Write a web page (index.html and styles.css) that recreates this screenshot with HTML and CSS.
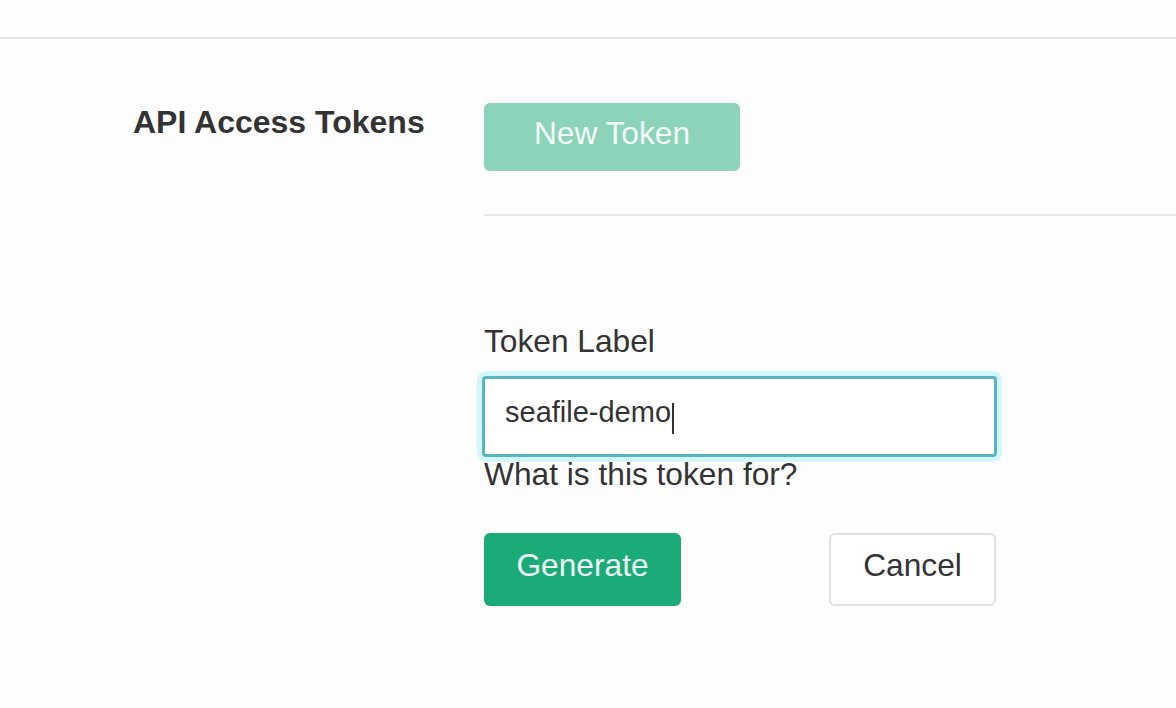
FILE: index.html
```html
<!DOCTYPE html>
<html lang="en">
<head>
<meta charset="utf-8">
<title>API Access Tokens</title>
<link rel="stylesheet" href="styles.css">
</head>
<body>
<div class="topbar"></div>
<section class="settings">
  <h3 class="section-title">API Access Tokens</h3>
  <div class="section-body">
    <button class="btn btn-new" type="button">New Token</button>
    <div class="divider"></div>
    <form class="token-form">
      <label class="field-label">Token Label</label>
      <div class="field-input" role="textbox"><span class="field-value">seafile-demo</span><span class="caret"></span></div>
      <p class="field-help">What is this token for?</p>
      <div class="actions">
        <button class="btn btn-primary" type="button">Generate</button>
        <button class="btn btn-secondary" type="button">Cancel</button>
      </div>
    </form>
  </div>
</section>
</body>
</html>
```

FILE: styles.css
```css
html, body {
  margin: 0;
  padding: 0;
  background: #fdfdfd;
  font-family: "Liberation Sans", Arial, Helvetica, sans-serif;
  color: #333;
}

.topbar {
  height: 37px;
  border-bottom: 2px solid #e6e6e6;
  background: #fdfdfd;
}

.settings {
  display: grid;
  grid-template-columns: 484px 1fr;
  padding-top: 64px;
}

.section-title {
  margin: 3px 0 0 0;
  padding-left: 133px;
  font-size: 32px;
  line-height: 1;
  font-weight: bold;
  color: #333;
}

.section-body {
  display: flex;
  flex-direction: column;
  align-items: flex-start;
}

.btn {
  font-family: "Liberation Sans", Arial, Helvetica, sans-serif;
  font-size: 31.7px;
  line-height: 1;
  border-radius: 6px;
  display: flex;
  align-items: center;
  justify-content: center;
  cursor: pointer;
}

.btn-new {
  width: 256px;
  height: 68px;
  padding: 0 0 6px 0;
  background: #8bd3b9;
  color: #f5fcf9;
  border: none;
}

.divider {
  align-self: stretch;
  height: 2px;
  background: #e6e6e6;
  margin-top: 43px;
}

.token-form {
  display: flex;
  flex-direction: column;
  align-items: flex-start;
  margin-top: 110px;
}

.field-label {
  font-size: 31.7px;
  line-height: 1;
  color: #333;
}

.field-input {
  box-sizing: border-box;
  width: 515px;
  height: 81px;
  margin: 18px 0 0 -2px;
  padding: 0 0 8px 20px;
  border: 3px solid #59b5c0;
  border-radius: 4px;
  background: #fff;
  box-shadow: 0 0 0 5px #d3f7fa;
  display: flex;
  align-items: center;
  font-size: 29px;
  line-height: 1;
  color: #333;
}

.caret {
  display: inline-block;
  width: 2px;
  height: 31px;
  background: #333;
  margin-left: 1px;
  position: relative;
  top: 6px;
}

.field-help {
  margin: 2px 0 0 0;
  font-size: 31.7px;
  line-height: 1;
  color: #333;
}

.actions {
  width: 512px;
  display: flex;
  justify-content: space-between;
  margin-top: 43px;
}

.btn-primary {
  width: 197px;
  height: 73px;
  padding: 0 0 8px 0;
  background: #1aab78;
  color: #effbf6;
  border: none;
}

.btn-secondary {
  box-sizing: border-box;
  width: 167px;
  height: 73px;
  padding: 0 0 8px 0;
  background: #fff;
  color: #333;
  border: 2px solid #e2e2e2;
}
```
